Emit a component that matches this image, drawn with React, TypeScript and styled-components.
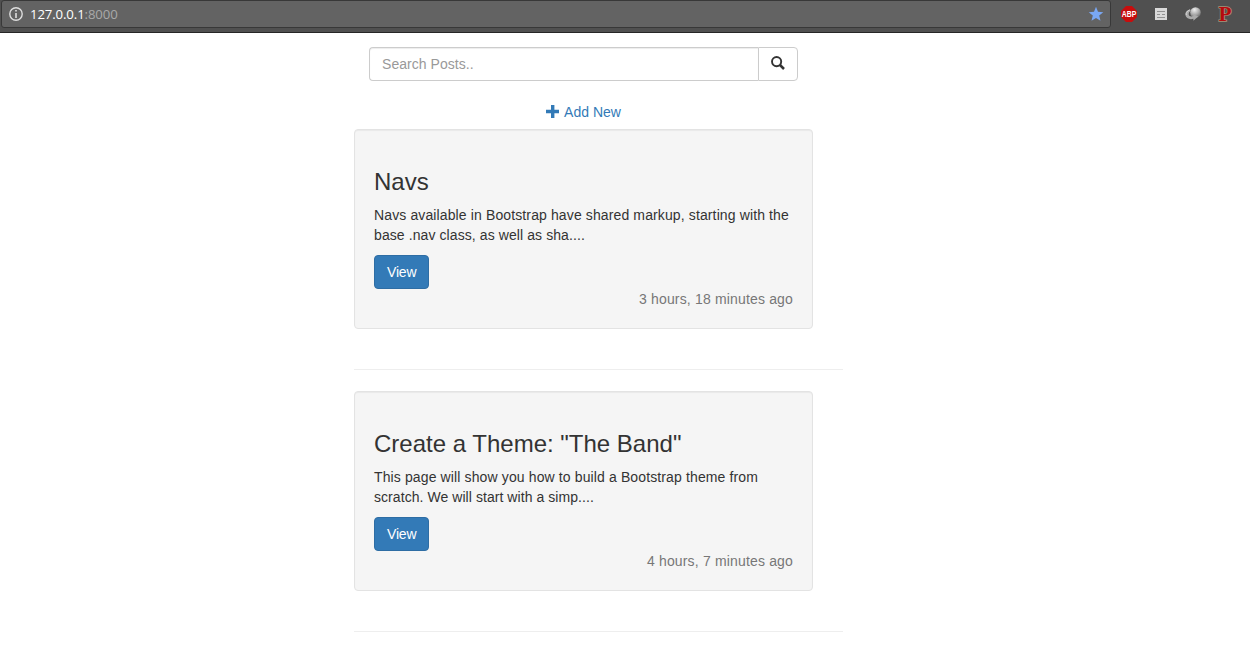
import React from "react";
import styled, { createGlobalStyle } from "styled-components";

const GlobalStyle = createGlobalStyle`
  *, *::before, *::after { box-sizing: border-box; }
  body {
    margin: 0;
    background: #fff;
    color: #333;
    font: 14px/20px "Liberation Sans", Arial, sans-serif;
    overflow: hidden;
  }
`;

const BrowserBar = styled.header`
  display: flex;
  height: 33px;
  padding-left: 1px;
  background: #505050;
  border-bottom: 1px solid #262626;
`;

const AddressField = styled.div`
  display: flex;
  align-items: center;
  width: 1110px;
  height: 28px;
  padding: 0 6px 0 7px;
  background: #636363;
  border: 1px solid #383838;
  border-radius: 3px;
`;

const Address = styled.span`
  flex: 1;
  margin-left: 7px;
  color: #a9a9a9;
  font: 13.2px/20px "Open Sans", "Noto Sans", sans-serif;
  letter-spacing: -0.12px;
`;

const Host = styled.span`
  color: #fff;
`;

const Extensions = styled.div`
  display: flex;
  gap: 16px;
  padding: 6px 0 0 10px;
  svg { display: block; overflow: visible; }
`;

const Page = styled.main`
  width: 489px;
  margin-left: 354px;
  padding-top: 14px;
`;

const SearchForm = styled.form`
  display: flex;
  width: 429px;
  height: 34px;
  margin: 0 0 21px 15px;
`;

const SearchInput = styled.input`
  flex: 1;
  min-width: 0;
  padding: 6px 12px;
  border: 1px solid #ccc;
  border-right: 0;
  border-radius: 4px 0 0 4px;
  box-shadow: inset 0 1px 1px rgba(0, 0, 0, 0.075);
  font: inherit;
  letter-spacing: 0.05px;
  outline: 0;
  &::placeholder { color: #999; opacity: 1; }
`;

const SearchButton = styled.button`
  display: flex;
  align-items: center;
  justify-content: center;
  width: 40px;
  padding: 0 0 2px;
  color: #333;
  background: #fff;
  border: 1px solid #ccc;
  border-radius: 0 4px 4px 0;
`;

const AddLink = styled.a`
  display: flex;
  align-items: center;
  justify-content: center;
  gap: 5px;
  width: 459px;
  height: 20px;
  margin-bottom: 7px;
  color: #337ab7;
  text-decoration: none;
  svg { margin-bottom: 2px; }
`;

const Well = styled.article`
  display: flex;
  flex-direction: column;
  align-items: flex-start;
  width: 459px;
  height: 200px;
  padding: 39px 19px 19px;
  background: #f5f5f5;
  border: 1px solid #e3e3e3;
  border-radius: 4px;
  box-shadow: inset 0 1px 1px rgba(0, 0, 0, 0.05);
`;

const Title = styled.h3`
  margin: 0 0 10px;
  font-size: 24px;
  font-weight: 400;
  line-height: 26px;
`;

const Excerpt = styled.p`
  margin: 0 0 10px;
  white-space: nowrap;
`;

const Line = styled.span<{ $tracking: number }>`
  display: block;
  letter-spacing: ${(p) => p.$tracking}px;
`;

const ViewButton = styled.a`
  width: 55px;
  padding: 6px 12px;
  color: #fff;
  letter-spacing: -0.2px;
  background: #337ab7;
  border: 1px solid #2e6da4;
  border-radius: 4px;
`;

const Age = styled.time`
  align-self: flex-end;
  color: #777;
  letter-spacing: 0.165px;
`;

const Divider = styled.hr`
  height: 1px;
  margin: 40px 0 21px;
  border: 0;
  background: #eee;
`;

const posts = [
  {
    title: "Navs",
    lines: [
      { text: "Navs available in Bootstrap have shared markup, starting with the", tracking: 0.122 },
      { text: "base .nav class, as well as sha....", tracking: 0.09 },
    ],
    age: "3 hours, 18 minutes ago",
  },
  {
    title: 'Create a Theme: "The Band"',
    lines: [
      { text: "This page will show you how to build a Bootstrap theme from", tracking: 0.125 },
      { text: "scratch. We will start with a simp....", tracking: 0.06 },
    ],
    age: "4 hours, 7 minutes ago",
  },
];

const InfoIcon = () => (
  <svg width="14" height="14" viewBox="0 0 14 14">
    <circle cx="7" cy="7" r="6.2" fill="none" stroke="#dedede" strokeWidth="1.4" />
    <path d="M6.2 3h1.6v1.6H6.2zM6.2 6h1.6v5H6.2z" fill="#dedede" />
  </svg>
);

const StarIcon = () => (
  <svg width="16" height="16" viewBox="0 0 16 16">
    <path d="M8 .8l2 5 5.3.4-4.1 3.4 1.3 5.2L8 12l-4.5 2.8 1.3-5.2L.7 6.2 6 5.8z" fill="#79a7f3" />
  </svg>
);

const AdBlockIcon = () => (
  <svg width="16" height="16" viewBox="0 0 16 16">
    <path d="M5 0h6l5 5v6l-5 5H5l-5-5V5z" fill="#c70d0d" />
    <text x="8" y="11" fill="#fff" fontFamily="Liberation Sans, sans-serif" fontSize="8.6" fontWeight="700" textAnchor="middle" textLength="14.4" lengthAdjust="spacingAndGlyphs">ABP</text>
  </svg>
);

const ReaderIcon = () => (
  <svg width="16" height="16" viewBox="0 0 16 16">
    <path d="M2 2h12v12H2z" fill="#d9d9d9" />
    <path d="M4 5.5h8M4 8.5h3M9 8.5h3M4 11.5h8" fill="none" stroke="#929292" />
  </svg>
);

const GlobeIcon = () => (
  <svg width="16" height="16" viewBox="0 0 16 16">
    <defs>
      <radialGradient id="ball" cx=".4" cy=".25" r=".75">
        <stop stopColor="#eee" />
        <stop offset=".6" stopColor="#aaa" />
        <stop offset="1" stopColor="#707070" />
      </radialGradient>
    </defs>
    <circle cx="10.5" cy="6.5" r="5.3" fill="url(#ball)" />
    <path d="M5.2 3.2C1.5 4 0 6.7.4 9c.6 3.5 4.3 4.8 8 3.8v2l4.8-4.4-4.8-2.2v1.9c-2.5.7-4.5.2-4.7-1.6-.1-1.6.8-3.2 1.9-3.5z" fill="#aaa" />
    <path d="M4.8 3.9C2 5 .8 7.2 1.4 9.1" fill="none" stroke="#d0d0d0" />
  </svg>
);

const LetterIcon = () => (
  <svg width="16" height="16" viewBox="0 0 16 16">
    <text x="8" y="14.5" fill="#b50a0d" stroke="#a4947c" strokeWidth="1.4" paintOrder="stroke" fontFamily="Liberation Serif, serif" fontSize="20" fontWeight="700" textAnchor="middle" textLength="13" lengthAdjust="spacingAndGlyphs">P</text>
  </svg>
);

const SearchIcon = () => (
  <svg width="14" height="14" viewBox="0 0 14 14" fill="none" stroke="currentColor">
    <circle cx="5.6" cy="5.6" r="4.6" strokeWidth="1.9" />
    <path d="M9 9l4 4" strokeWidth="2.5" />
  </svg>
);

const PlusIcon = () => (
  <svg width="13" height="13" viewBox="0 0 13 13">
    <path d="M5 0h3.4v4.8H13v3.4H8.4V13H5V8.2H0V4.8h5z" fill="currentColor" />
  </svg>
);

export default function App() {
  return (
    <>
      <GlobalStyle />
      <BrowserBar>
        <AddressField>
          <InfoIcon />
          <Address><Host>127.0.0.1</Host>:8000</Address>
          <StarIcon />
        </AddressField>
        <Extensions>
          <AdBlockIcon />
          <ReaderIcon />
          <GlobeIcon />
          <LetterIcon />
        </Extensions>
      </BrowserBar>
      <Page>
        <SearchForm>
          <SearchInput placeholder="Search Posts.." />
          <SearchButton type="button" aria-label="Search"><SearchIcon /></SearchButton>
        </SearchForm>
        <AddLink><PlusIcon />Add New</AddLink>
        {posts.map((post) => (
          <React.Fragment key={post.title}>
            <Well>
              <Title>{post.title}</Title>
              <Excerpt>
                {post.lines.map((line) => (
                  <Line key={line.text} $tracking={line.tracking}>{line.text}</Line>
                ))}
              </Excerpt>
              <ViewButton>View</ViewButton>
              <Age>{post.age}</Age>
            </Well>
            <Divider />
          </React.Fragment>
        ))}
      </Page>
    </>
  );
}
